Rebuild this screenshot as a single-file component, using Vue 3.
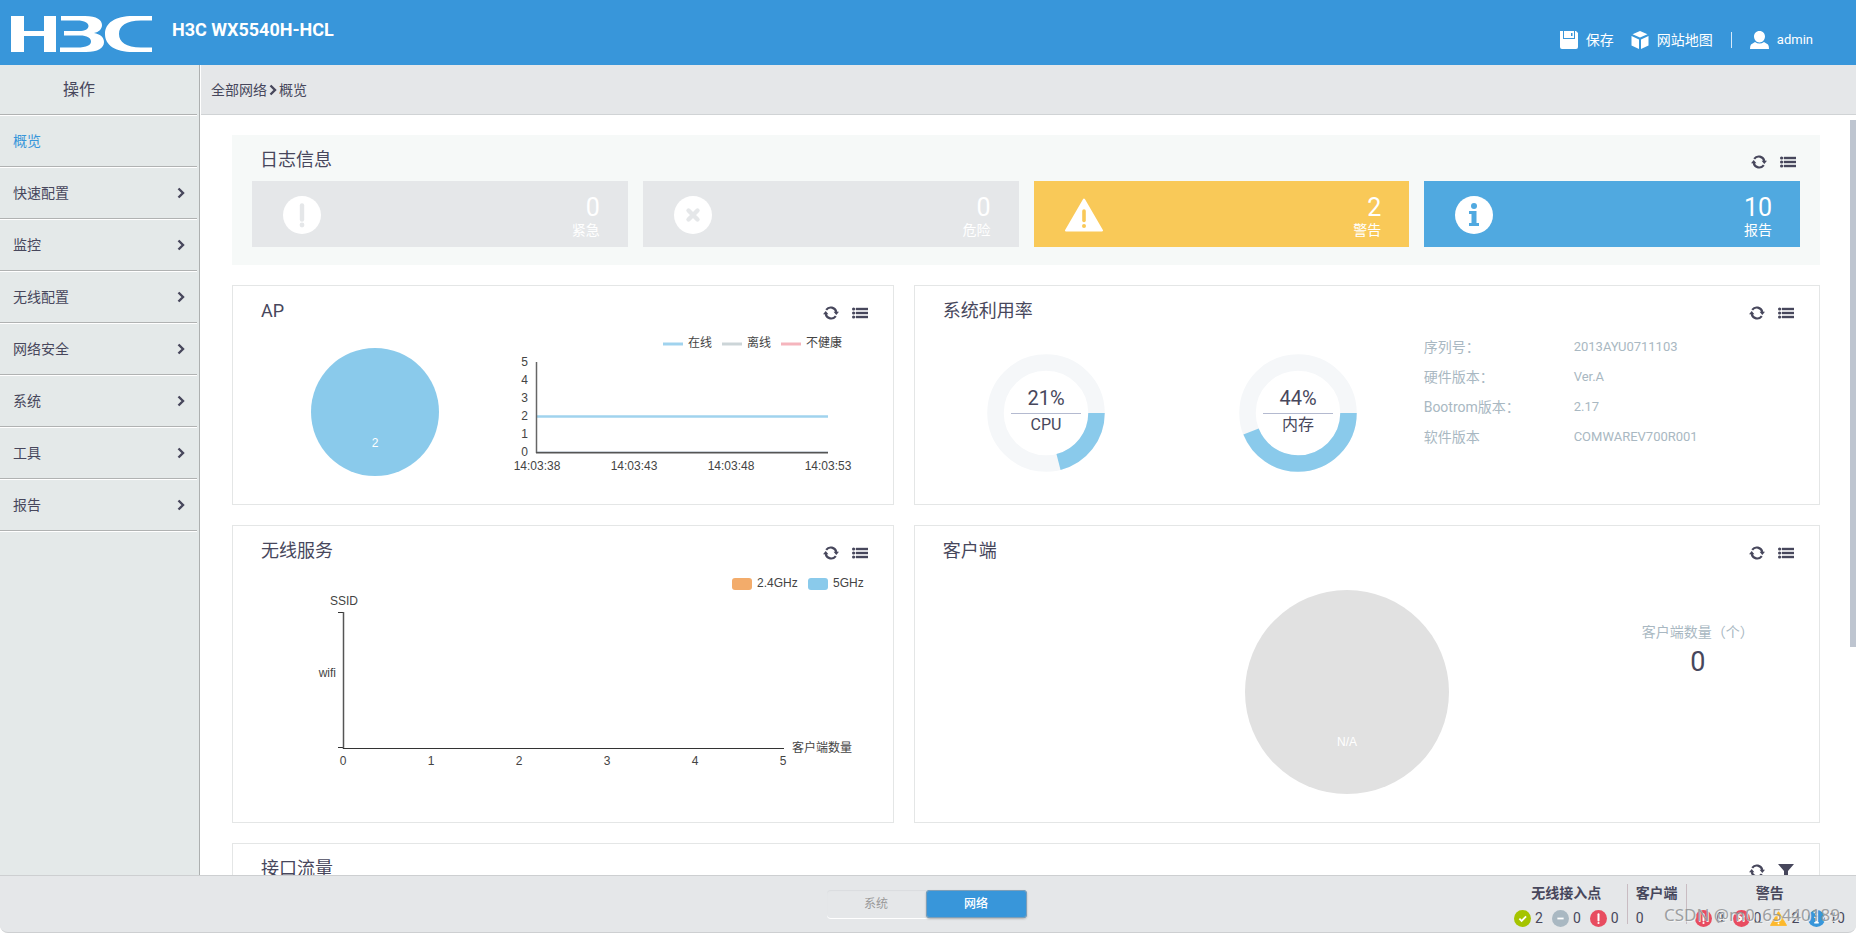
<script setup>
const menu = [
  { label: '概览', active: true },
  { label: '快速配置' },
  { label: '监控' },
  { label: '无线配置' },
  { label: '网络安全' },
  { label: '系统' },
  { label: '工具' },
  { label: '报告' },
]

const logs = [
  { icon: 'alert', count: 0, label: '紧急', tone: 'idle' },
  { icon: 'cross', count: 0, label: '危险', tone: 'idle' },
  { icon: 'warn', count: 2, label: '警告', tone: 'warning' },
  { icon: 'info', count: 10, label: '报告', tone: 'report' },
]

const gauges = [
  { value: 21, label: 'CPU' },
  { value: 44, label: '内存' },
]

const facts = [
  { name: '序列号：', value: '2013AYU0711103' },
  { name: '硬件版本：', value: 'Ver.A' },
  { name: 'Bootrom版本：', value: '2.17' },
  { name: '软件版本', value: 'COMWAREV700R001' },
]

const times = ['14:03:38', '14:03:43', '14:03:48', '14:03:53']

const apStats = [
  { icon: 'check', color: '#a5c400', count: 2 },
  { icon: 'minus', color: '#a9b8c2', count: 0 },
  { icon: 'alert', color: '#e84c60', count: 0 },
]
const alarmStats = [
  { icon: 'alert', color: '#e84c60', count: 0 },
  { icon: 'cross', color: '#e84c60', count: 0 },
  { icon: 'warn', color: '#fdb92c', count: 2 },
  { icon: 'info', color: '#3896da', count: 10 },
]
</script>

<template>
  <svg class="sprite" aria-hidden="true">
    <symbol id="i-refresh" viewBox="0 0 16 14">
      <path d="M3.200 3.800A5.700 5.700 0 0 1 13.300 6M12.800 10.200A5.700 5.700 0 0 1 2.700 8" fill="none" stroke="currentColor" stroke-width="2.200" />
      <path d="M0 8.200 2.700 5 5.400 8.200zM10.600 5.800H16L13.300 9z" fill="currentColor" />
    </symbol>
    <symbol id="i-list" viewBox="0 0 16 12">
      <path d="M4 1h12v2H4zM4 5h12v2H4zM4 9h12v2H4z" fill="currentColor" stroke="currentColor" stroke-width=".4" />
      <circle cx="1.600" cy="2" r="1.600" fill="currentColor" />
      <circle cx="1.600" cy="6" r="1.600" fill="currentColor" />
      <circle cx="1.600" cy="10" r="1.600" fill="currentColor" />
    </symbol>
    <symbol id="i-filter" viewBox="0 0 16 14">
      <path d="M0 0h16L10 7v7l-4-2V7z" fill="currentColor" />
    </symbol>
    <symbol id="i-chevron" viewBox="0 0 8 12">
      <path d="M1.500 1.500 6 6l-4.500 4.500" fill="none" stroke="currentColor" stroke-width="2.400" />
    </symbol>
    <symbol id="i-alert" viewBox="0 0 38 38">
      <circle cx="19" cy="19" r="19" fill="currentColor" />
      <path d="M19 9.500v14" stroke="var(--hole)" stroke-width="4.400" stroke-linecap="round" />
      <circle cx="19" cy="29" r="2.400" fill="var(--hole)" />
    </symbol>
    <symbol id="i-cross" viewBox="0 0 38 38">
      <circle cx="19" cy="19" r="19" fill="currentColor" />
      <path d="m14.500 14.500 9 9M23.500 14.500l-9 9" stroke="var(--hole)" stroke-width="4.400" stroke-linecap="round" />
    </symbol>
    <symbol id="i-warn" viewBox="0 0 38 38">
      <path d="M19 3.500 37 34.500H1z" fill="currentColor" stroke="currentColor" stroke-width="2" stroke-linejoin="round" />
      <path d="M19 15v9.500" stroke="var(--hole)" stroke-width="3.600" stroke-linecap="round" />
      <circle cx="19" cy="30" r="2" fill="var(--hole)" />
    </symbol>
    <symbol id="i-info" viewBox="0 0 38 38">
      <circle cx="19" cy="19" r="19" fill="currentColor" />
      <circle cx="19" cy="10" r="3" fill="var(--hole)" />
      <path d="M14 15h7.500v12H24v3H14v-3h2.500v-9H14z" fill="var(--hole)" />
    </symbol>
    <symbol id="i-check" viewBox="0 0 38 38">
      <circle cx="19" cy="19" r="19" fill="currentColor" />
      <path d="m12 19.500 5 5 10-10" fill="none" stroke="var(--hole)" stroke-width="4" />
    </symbol>
    <symbol id="i-minus" viewBox="0 0 38 38">
      <circle cx="19" cy="19" r="19" fill="currentColor" />
      <path d="M12 19h14" stroke="var(--hole)" stroke-width="4" />
    </symbol>
  </svg>

  <div class="shell">
    <header class="top">
      <svg class="logo" viewBox="0 0 142 36" role="img" aria-label="H3C">
        <path fill="#fff" d="M0 0h13v15h20V0h12v36H33V20H13v16H0z" />
        <path fill="#fff" d="M50 0H74C86 0 91 4 91 9c0 4-3 7-8 8 6 1 10 4 10 9 0 6-6 10-18 10H49v-4.500h17c10 0 14-2.500 14-6s-4-6-11-6H53V15h15c6 0 9.500-2 9.500-5S74 4.500 66 4.500H50z" />
        <path fill="#fff" d="M141 0h-19C104 0 94 7 94 18s10 18 28 18h19v-4.500h-11c-15 0-22-5.500-22-13.500s7-13.500 22-13.500h11z" />
      </svg>
      <h1 class="device">H3C WX5540H-HCL</h1>
      <nav class="account">
        <button type="button" class="top-btn">
          <svg width="18" height="18" viewBox="0 0 18 18" aria-hidden="true">
            <path fill="#fff" fill-rule="evenodd" d="M0 0h3v8h12V0h1l2 2v14q0 2-2 2H2q-2 0-2-2zM4 0h10v7H4zM11 2v3h1.500V2z" />
          </svg>
          <span>保存</span>
        </button>
        <button type="button" class="top-btn map">
          <svg width="18" height="18" viewBox="0 0 18 18" aria-hidden="true">
            <path fill="#fff" d="m9 0 7.500 3.200L9 6.600 1.500 3.200zM.500 5 8 8.400V18L.500 14.500zM17.500 5 10 8.400V18l7.500-3.500z" />
          </svg>
          <span>网站地图</span>
        </button>
        <span class="bar"></span>
        <a href="#" class="top-btn">
          <svg width="19" height="18" viewBox="0 0 19 18" aria-hidden="true">
            <path fill="#fff" d="M9.500 0C13 0 15 2.500 15 5.500S12.500 11.500 9.500 11.500 4 8.500 4 5.500 6 0 9.500 0zM5 11q4.500 3 9 0l4 2.500q1 1 1 4.500H0q0-3.500 1-4.500z" />
          </svg>
          <span>admin</span>
        </a>
      </nav>
    </header>

    <aside class="side">
      <h2 class="side-title">操作</h2>
      <a v-for="m in menu" :key="m.label" href="#" class="side-item" :class="{ active: m.active }">
        <span>{{ m.label }}</span>
        <svg v-if="!m.active" width="8" height="12" aria-hidden="true"><use href="#i-chevron" /></svg>
      </a>
    </aside>

    <main class="main">
      <nav class="crumbs">
        <a href="#">全部网络</a>
        <svg width="8" height="12" aria-hidden="true"><use href="#i-chevron" /></svg>
        <span>概览</span>
      </nav>
      <div class="scroll">
        <section class="log">
          <div class="head">
            <h3>日志信息</h3>
            <div class="tools">
              <button type="button" aria-label="刷新"><svg width="16" height="14"><use href="#i-refresh" /></svg></button>
              <button type="button" aria-label="列表"><svg width="16" height="12"><use href="#i-list" /></svg></button>
            </div>
          </div>
          <div class="tiles">
            <div v-for="l in logs" :key="l.label" class="tile" :class="l.tone">
              <svg width="38" height="38" aria-hidden="true"><use :href="'#i-' + l.icon" /></svg>
              <div class="tile-text"><strong>{{ l.count }}</strong><span>{{ l.label }}</span></div>
            </div>
          </div>
        </section>

        <div class="cards">
          <section class="card">
            <div class="head">
              <h3 class="latin">AP</h3>
              <div class="tools">
                <button type="button" aria-label="刷新"><svg width="16" height="14"><use href="#i-refresh" /></svg></button>
                <button type="button" aria-label="列表"><svg width="16" height="12"><use href="#i-list" /></svg></button>
              </div>
            </div>
            <div class="ap">
              <svg class="chart" width="128" height="128" viewBox="0 0 128 128">
                <circle cx="64" cy="64" r="64" fill="#8acaeb" />
                <text x="64" y="99" text-anchor="middle" class="on-fill">2</text>
              </svg>
              <svg class="chart" width="376" height="170" viewBox="0 0 376 170">
                <path d="M146 12h20" stroke="#a0d3ee" stroke-width="3" />
                <path d="M205 12h20" stroke="#ccd5d8" stroke-width="3" />
                <path d="M264 12h20" stroke="#f5b5bd" stroke-width="3" />
                <text x="171" y="15">在线</text>
                <text x="230" y="15">离线</text>
                <text x="289" y="15">不健康</text>
                <text v-for="n in 6" :key="n" x="11" :y="142 - n * 18" text-anchor="end">{{ n - 1 }}</text>
                <path d="M20 84.500h291" stroke="#a0d3ee" stroke-width="2.500" />
                <path d="M20 119.500h291" stroke="#ccd3da" stroke-width="1" />
                <path d="M19.500 30v91" stroke="#666" stroke-width="1.500" />
                <path d="M19 120.800h292" stroke="#555" stroke-width="1.500" />
                <text v-for="(t, i) in times" :key="t" :x="20 + i * 97" y="138" text-anchor="middle">{{ t }}</text>
              </svg>
            </div>
          </section>

          <section class="card">
            <div class="head">
              <h3>系统利用率</h3>
              <div class="tools">
                <button type="button" aria-label="刷新"><svg width="16" height="14"><use href="#i-refresh" /></svg></button>
                <button type="button" aria-label="列表"><svg width="16" height="12"><use href="#i-list" /></svg></button>
              </div>
            </div>
            <div class="usage">
              <svg v-for="g in gauges" :key="g.label" class="gauge" width="118" height="118" viewBox="0 0 118 118">
                <circle cx="59" cy="59" r="50.500" fill="none" stroke="#f5f7f9" stroke-width="16.500" />
                <circle cx="59" cy="59" r="50.500" fill="none" stroke="#8acaeb" stroke-width="16.500" pathLength="100" :stroke-dasharray="g.value + ' ' + (100 - g.value)" />
                <path d="M24 59.500h70" stroke="#b4bad0" />
                <text x="59" y="51" class="pct" text-anchor="middle">{{ g.value }}%</text>
                <text x="59" y="76" class="cap" text-anchor="middle">{{ g.label }}</text>
              </svg>
              <dl class="facts">
                <template v-for="f in facts" :key="f.name">
                  <dt>{{ f.name }}</dt>
                  <dd>{{ f.value }}</dd>
                </template>
              </dl>
            </div>
          </section>

          <section class="card">
            <div class="head">
              <h3>无线服务</h3>
              <div class="tools">
                <button type="button" aria-label="刷新"><svg width="16" height="14"><use href="#i-refresh" /></svg></button>
                <button type="button" aria-label="列表"><svg width="16" height="12"><use href="#i-list" /></svg></button>
              </div>
            </div>
            <div class="wireless">
              <svg class="chart" width="660" height="246" viewBox="0 0 660 246">
                <rect x="499" y="2" width="20" height="12" rx="3" fill="#f3ac6b" />
                <rect x="575" y="2" width="20" height="12" rx="3" fill="#8acaeb" />
                <text x="524" y="11">2.4GHz</text>
                <text x="600" y="11">5GHz</text>
                <text x="111" y="29" text-anchor="middle">SSID</text>
                <text x="103" y="101" text-anchor="end">wifi</text>
                <path d="M105 36.500h6M105 171.500h6" stroke="#333" />
                <path d="M110.500 36v137" stroke="#555" stroke-width="1.500" />
                <path d="M110 172.500h441" stroke="#333" />
                <text v-for="n in 6" :key="n" :x="22 + n * 88" y="189" text-anchor="middle">{{ n - 1 }}</text>
                <text x="559" y="176">客户端数量</text>
              </svg>
            </div>
          </section>

          <section class="card">
            <div class="head">
              <h3>客户端</h3>
              <div class="tools">
                <button type="button" aria-label="刷新"><svg width="16" height="14"><use href="#i-refresh" /></svg></button>
                <button type="button" aria-label="列表"><svg width="16" height="12"><use href="#i-list" /></svg></button>
              </div>
            </div>
            <div class="clients">
              <svg class="chart" width="204" height="204" viewBox="0 0 204 204">
                <circle cx="102" cy="102" r="102" fill="#e1e1e1" />
                <text x="102" y="156" text-anchor="middle" class="on-fill">N/A</text>
              </svg>
              <div class="client-count"><span>客户端数量（个）</span><strong>0</strong></div>
            </div>
          </section>

          <section class="card wide">
            <div class="head">
              <h3>接口流量</h3>
              <div class="tools">
                <button type="button" aria-label="刷新"><svg width="16" height="14"><use href="#i-refresh" /></svg></button>
                <button type="button" aria-label="筛选"><svg width="16" height="14"><use href="#i-filter" /></svg></button>
              </div>
            </div>
          </section>
        </div>
      </div>
      <div class="thumb"></div>
    </main>

    <footer class="foot">
      <div class="switch">
        <button type="button">系统</button>
        <button type="button" class="on">网络</button>
      </div>
      <div class="status">
        <div class="group">
          <b>无线接入点</b>
          <div class="stats">
            <span v-for="s in apStats" :key="s.icon" class="stat">
              <svg width="17" height="17" :style="{ color: s.color }" aria-hidden="true"><use :href="'#i-' + s.icon" /></svg>{{ s.count }}
            </span>
          </div>
        </div>
        <div class="group left">
          <b>客户端</b>
          <div class="stats"><span class="stat">0</span></div>
        </div>
        <div class="group">
          <b>警告</b>
          <div class="stats">
            <span v-for="s in alarmStats" :key="s.icon" class="stat">
              <svg width="17" height="17" :style="{ color: s.color }" aria-hidden="true"><use :href="'#i-' + s.icon" /></svg>{{ s.count }}
            </span>
          </div>
        </div>
      </div>
      <span class="watermark">CSDN @m0_65440189</span>
    </footer>
  </div>
</template>

<style>
body {
  margin: 0;
  background: #fff;
}
</style>

<style scoped>
.sprite {
  position: absolute;
  width: 0;
  height: 0;
}
.shell {
  display: grid;
  grid-template: 65px minmax(0, 1fr) 58px / 201px minmax(0, 1fr);
  height: 100vh;
  overflow: hidden;
  color: #47475c;
  font: 14px/20px Roboto, 'Noto Sans CJK SC', sans-serif;
}
h1, h2, h3, dl, dd {
  margin: 0;
}
button {
  border: 0;
  padding: 0;
  background: none;
  color: inherit;
  font: inherit;
  cursor: pointer;
}
a {
  color: inherit;
  text-decoration: none;
}
svg {
  display: block;
  flex: none;
}

.top {
  grid-column: 1 / -1;
  display: flex;
  align-items: center;
  background: #3896da;
  color: #fff;
  padding: 0 43px 0 11px;
}
.logo {
  width: 142px;
  height: 36px;
  padding-top: 3px;
}
.device {
  margin-left: 19px;
  padding-bottom: 6px;
  font-size: 18px;
  line-height: 24px;
  font-weight: 700;
}
.account {
  display: flex;
  align-items: center;
  margin-left: auto;
  padding-top: 14px;
}
.top-btn {
  display: flex;
  align-items: center;
  gap: 8px;
}
.map {
  margin-left: 17px;
}
.top-btn:last-child {
  font-size: 13px;
}
.bar {
  width: 1px;
  height: 16px;
  margin: 0 18px;
  background: #d7eafa;
}

.side {
  background: #e4e9e9;
  border-right: 1px solid #adb0b0;
  margin-right: 1px;
  padding-right: 2px;
}
.side-title,
.side-item {
  box-sizing: border-box;
  border-bottom: 1px solid #b0b2b2;
  box-shadow: 0 1px #fff;
  margin-bottom: 1px;
}
.side-title {
  height: 50px;
  padding-left: 63px;
  font-size: 16px;
  line-height: 50px;
  font-weight: 400;
}
.side-item {
  display: flex;
  align-items: center;
  justify-content: space-between;
  height: 51px;
  padding: 0 12px 0 13px;
}
.side-item.active {
  color: #3896da;
}

.main {
  position: relative;
  display: flex;
  flex-direction: column;
  min-height: 0;
}
.crumbs {
  flex: none;
  display: flex;
  align-items: center;
  gap: 2px;
  height: 49px;
  padding-left: 10px;
  background: #e5e7e9;
  border-bottom: 1px solid #d0d3d5;
}
.scroll {
  flex: 1;
  min-height: 0;
  overflow: hidden;
  padding: 20px 36px 0 31px;
}
.thumb {
  position: absolute;
  top: 55px;
  right: 0;
  width: 6px;
  height: 527px;
  background: #bec5d0;
}

.log {
  padding: 0 20px 18px;
  background: #f6f9f8;
}
.head {
  display: flex;
  align-items: center;
  justify-content: space-between;
  box-sizing: border-box;
  height: 50px;
  padding: 0 25px 0 28px;
}
.log .head {
  height: 46px;
  padding: 4px 4px 0 8px;
}
h3 {
  font-size: 18px;
  line-height: 24px;
  font-weight: 400;
}
.tools {
  display: flex;
  align-items: center;
  gap: 13px;
  padding-top: 4px;
}
.tiles {
  display: grid;
  grid-template-columns: repeat(4, 1fr);
  gap: 15px;
}
.tile {
  --hole: #e5e7e9;
  display: flex;
  align-items: center;
  justify-content: space-between;
  height: 66px;
  padding: 2px 28px 0 31px;
  box-sizing: border-box;
  background: var(--hole);
  color: #fff;
}
.tile.warning {
  --hole: #f9c958;
}
.tile.report {
  --hole: #50a9e0;
}
.tile-text {
  display: grid;
  justify-items: end;
  padding-top: 6px;
}
.tile-text strong {
  font-size: 25px;
  line-height: 24px;
  font-weight: 400;
}

.cards {
  display: grid;
  grid-template-columns: calc(100% * 5 / 12) minmax(0, 1fr);
  gap: 20px;
  margin-top: 20px;
}
.card {
  border: 1px solid #e4e6e6;
  background: #fff;
}
.wide {
  grid-column: 1 / -1;
  height: 220px;
}
.chart {
  font: 12px 'Liberation Sans', 'Noto Sans CJK SC', sans-serif;
  fill: #444;
  overflow: visible;
}
.on-fill {
  fill: #fff;
}
.ap {
  display: grid;
  grid-template-columns: 284px 1fr;
  height: 168px;
}
.ap > :first-child {
  margin-top: 12px;
  justify-self: center;
}
.ap > :last-child {
  margin-top: -4px;
}
.usage {
  display: grid;
  grid-template-columns: 262px 242px 1fr;
  height: 168px;
}
.gauge {
  justify-self: center;
  margin-top: 18px;
  fill: #47475c;
}
.pct {
  font-size: 20px;
}
.cap {
  font-size: 16px;
}
.facts {
  display: grid;
  grid-template-columns: 150px 1fr;
  grid-auto-rows: 30px;
  align-content: start;
  align-items: center;
  padding: 0 0 0 5px;
  color: #a9b8c2;
}
.facts dd {
  font-size: 13px;
}
.wireless,
.clients {
  height: 246px;
}
.clients {
  display: grid;
  grid-template-columns: 330px 332px 1fr;
}
.usage .facts {
  margin-top: -4px;
}
.clients svg {
  grid-column: 2;
  margin-top: 14px;
}
.client-count {
  display: flex;
  flex-direction: column;
  align-items: center;
  gap: 5px;
  padding-top: 46px;
  color: #a9b8c2;
}
.client-count strong {
  color: #47475c;
  font-size: 27px;
  line-height: 30px;
  font-weight: 400;
}

.foot {
  position: relative;
  grid-column: 1 / -1;
  display: grid;
  grid-template-columns: 1fr auto 1fr;
  box-sizing: border-box;
  border-top: 1px solid #cdcfd1;
  border-bottom: 1px solid #cdcfd1;
  border-radius: 0 0 8px 8px;
  background: #e5e7e9;
  padding-right: 3px;
}
.switch {
  grid-column: 2;
  display: flex;
  margin-top: 14px;
  height: 28px;
  border-radius: 4px;
  box-shadow: inset 0 1px 1px #dadcdf, 0 1px #fff;
}
.switch button {
  width: 99px;
  border-radius: 4px;
  color: #999;
  font-size: 12px;
}
.switch .on {
  width: 101px;
  background: #3896da;
  color: #fff;
  font-weight: 500;
  box-shadow: inset 0 0 0 1px #7d9fb9, 0 1px 2px #aaa;
}
.status {
  justify-self: end;
  display: flex;
  padding-top: 8px;
}
.group {
  height: 40px;
  padding: 0 8px;
}
.group + .group {
  border-left: 1px solid #c9bcc2;
}
.group b {
  display: block;
  text-align: center;
  line-height: 18px;
  font-weight: 700;
}
.group.left b {
  text-align: left;
}
.stats {
  display: flex;
  gap: 9px;
  padding-top: 6px;
}
.stat {
  --hole: #fff;
  display: flex;
  align-items: center;
  gap: 4px;
}
.watermark {
  position: absolute;
  right: 16px;
  bottom: 6px;
  color: #96989a;
  font: 17px/22px 'Noto Sans', sans-serif;
  text-shadow: 1px 1px #f6f6f6;
  opacity: 0.9;
}
</style>
